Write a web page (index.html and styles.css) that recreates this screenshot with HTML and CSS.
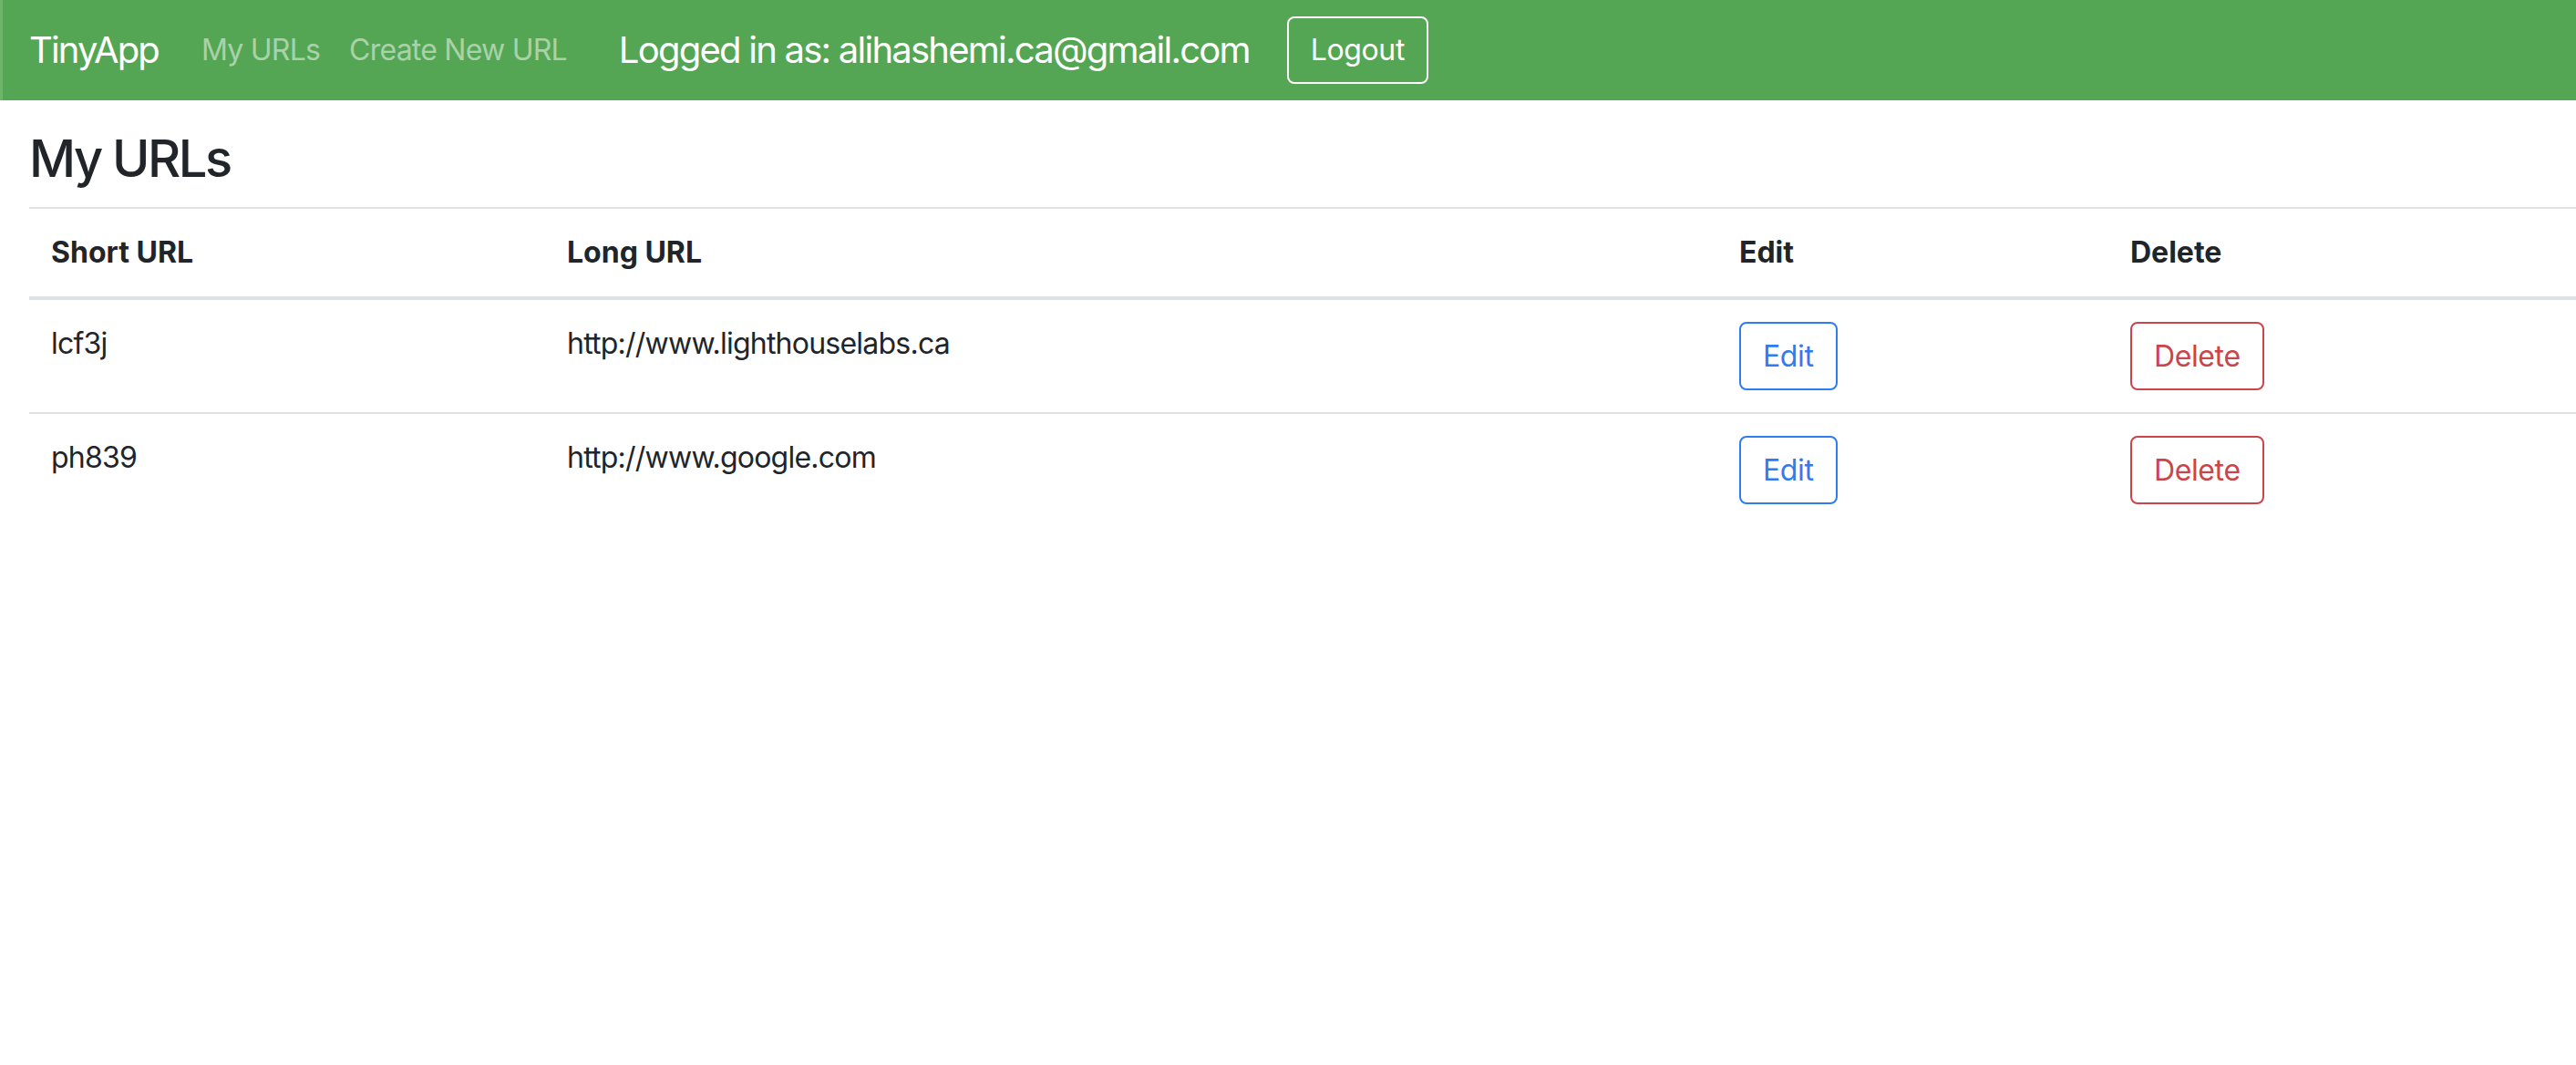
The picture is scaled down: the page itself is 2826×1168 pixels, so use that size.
FILE: index.html
```html
<!DOCTYPE html>
<html lang="en">
<head>
<meta charset="utf-8">
<title>TinyApp</title>
<link rel="stylesheet" href="styles.css">
</head>
<body>
<nav class="navbar">
  <a class="brand" href="#">TinyApp</a>
  <ul class="nav-links">
    <li><a class="nav-link" href="#">My URLs</a></li>
    <li><a class="nav-link" href="#">Create New URL</a></li>
  </ul>
  <span class="user">Logged in as: alihashemi.ca@gmail.com</span>
  <button class="btn btn-light">Logout</button>
</nav>
<main class="content">
  <h3 class="title">My URLs</h3>
  <table class="urls">
    <colgroup>
      <col class="col-short">
      <col class="col-long">
      <col class="col-edit">
      <col class="col-delete">
    </colgroup>
    <thead>
      <tr>
        <th>Short URL</th>
        <th>Long URL</th>
        <th>Edit</th>
        <th>Delete</th>
      </tr>
    </thead>
    <tbody>
      <tr>
        <td>lcf3j</td>
        <td>http://www.lighthouselabs.ca</td>
        <td><button class="btn btn-blue">Edit</button></td>
        <td><button class="btn btn-red">Delete</button></td>
      </tr>
      <tr>
        <td>ph839</td>
        <td>http://www.google.com</td>
        <td><button class="btn btn-blue">Edit</button></td>
        <td><button class="btn btn-red">Delete</button></td>
      </tr>
    </tbody>
  </table>
</main>
</body>
</html>
```
FILE: styles.css
```css
html, body {
  margin: 0;
  padding: 0;
  background: #ffffff;
}
body {
  font-family: Inter, "Liberation Sans", sans-serif;
  font-size: 32px;
  line-height: 1.5;
  color: #212529;
  letter-spacing: -0.024em;
}
.navbar {
  display: flex;
  align-items: center;
  height: 110px;
  box-sizing: border-box;
  padding: 0 32px;
  background: #54a654;
  box-shadow: inset 3px 0 0 #6cb66a;
}
.brand {
  font-size: 40px;
  line-height: 60px;
  letter-spacing: -0.046em;
  padding: 10px 0;
  margin-right: 31px;
  color: #ffffff;
  text-decoration: none;
}
.nav-links {
  display: flex;
  list-style: none;
  margin: 0;
  padding: 0;
}
.nav-link {
  display: block;
  padding: 16px;
  color: rgba(255, 255, 255, 0.5);
  text-decoration: none;
}
.user {
  font-size: 40px;
  line-height: 60px;
  letter-spacing: -0.044em;
  color: #ffffff;
  margin-left: 41px;
}
.btn {
  font-family: inherit;
  font-size: 32px;
  line-height: 47px;
  letter-spacing: -0.012em;
  padding: 12px 24px;
  border: 2px solid transparent;
  border-radius: 8px;
  background: transparent;
  cursor: pointer;
}
.btn-light {
  margin-left: 41px;
  border-color: #ffffff;
  color: #ffffff;
  line-height: 46px;
}
.btn-blue {
  border-color: #2f7cf2;
  color: #2f7cf2;
}
.btn-red {
  border-color: #cb444a;
  color: #cb444a;
}
.content {
  padding: 31px 0 0 32px;
}
.title {
  margin: 0 0 19px 0;
  font-size: 56px;
  font-weight: 500;
  line-height: 1.2;
  letter-spacing: -0.045em;
}
.urls {
  width: 100%;
  border-collapse: collapse;
  table-layout: fixed;
}
.col-short { width: 566px; }
.col-long { width: 1286px; }
.col-edit { width: 429px; }
.urls th,
.urls td {
  padding: 24px;
  text-align: left;
  vertical-align: top;
  border-top: 2px solid #dee2e6;
}
.urls th {
  font-weight: 700;
  letter-spacing: 0;
  vertical-align: bottom;
  border-bottom: 4px solid #dee2e6;
}
```
